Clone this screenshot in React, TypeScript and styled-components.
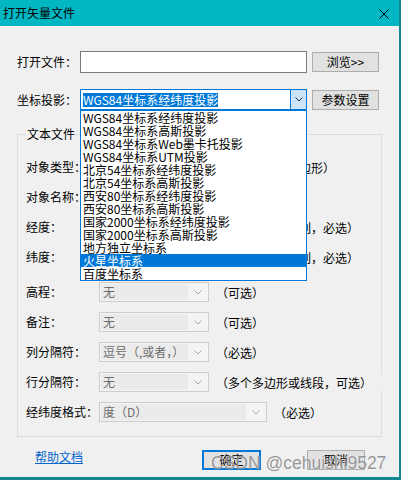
import React from "react";
import styled, { createGlobalStyle } from "styled-components";

const GlobalStyle = createGlobalStyle`
  html, body { margin: 0; padding: 0; background: #13878f; }
  body {
    width: 401px; height: 480px; overflow: hidden;
    font-family: "Noto Sans CJK SC", "Microsoft YaHei", sans-serif;
    font-size: 12px; color: #000;
  }
  * { box-sizing: border-box; }
`;

const Window = styled.div`
  position: relative;
  width: 399px;
  height: 477px;
  background: #f0f0f0;
  display: flex;
  flex-direction: column;
`;

const TitleBar = styled.div`
  height: 26px;
  flex-shrink: 0;
  background: #00b7c3;
  display: flex;
  align-items: center;
  justify-content: space-between;
  padding: 0 10px 0 3px;
`;

const Title = styled.span`
  font-size: 12px;
  line-height: 14px;
`;

const CloseIcon = styled.svg`
  margin-top: 2px;
`;

const Body = styled.div`
  padding: 25px 17px 0 17px;
  display: flex;
  flex-direction: column;
`;

const FormRow = styled.div<{ $top?: number; $h: number }>`
  display: flex;
  align-items: center;
  height: ${(p) => p.$h}px;
  margin-top: ${(p) => p.$top ?? 0}px;
`;

const Label = styled.span<{ $w: number }>`
  width: ${(p) => p.$w}px;
  flex-shrink: 0;
  line-height: 14px;
  white-space: nowrap;
`;

const TextInput = styled.div`
  width: 227px;
  height: 22px;
  background: #fff;
  border: 1px solid #7a7a7a;
`;

const PushButton = styled.div<{ $w: number; $focus?: boolean }>`
  width: ${(p) => p.$w}px;
  height: 20px;
  background: #e1e1e1;
  border: ${(p) => (p.$focus ? "2px solid #0078d7" : "1px solid #adadad")};
  display: flex;
  align-items: center;
  justify-content: center;
  line-height: 14px;
  white-space: nowrap;
`;

const SideButton = styled(PushButton)`
  margin-left: 5px;
`;

const ActiveCombo = styled.div`
  position: relative;
  width: 227px;
  height: 21px;
  background: #fff;
  border: 1px solid #0078d7;
  display: flex;
  align-items: center;
`;

const SelectedText = styled.span`
  margin-left: 2px;
  height: 14px;
  line-height: 14px;
  background: #0078d7;
  color: #fff;
  white-space: nowrap;
`;

const DropButton = styled.div`
  margin-left: auto;
  width: 16px;
  height: 100%;
  background: #cce4f7;
  border-left: 1px solid #0078d7;
  display: flex;
  align-items: center;
  justify-content: center;
`;

const DropList = styled.ul`
  position: absolute;
  z-index: 10;
  top: calc(100% + 1px);
  left: -1px;
  width: 227px;
  margin: 0;
  padding: 0;
  list-style: none;
  background: #fff;
  border: 1px solid #0078d7;
`;

const ListItem = styled.li<{ $active?: boolean }>`
  height: 13px;
  line-height: 13px;
  padding-left: 2px;
  white-space: nowrap;
  background: ${(p) => (p.$active ? "#0078d7" : "transparent")};
  color: ${(p) => (p.$active ? "#fff" : "#000")};
`;

const GroupBox = styled.fieldset`
  margin: 17px 0 0 0;
  padding: 0 0 14px 8px;
  width: 365px;
  min-width: 0;
  border: 1px solid #dcdcdc;
`;

const GroupLegend = styled.legend`
  padding: 0 1px;
  line-height: 14px;
  font-size: 12px;
`;

const GroupRows = styled.div`
  margin-top: 16px;
  display: flex;
  flex-direction: column;
  gap: 10px;
`;

const GroupRow = styled.div<{ $extra?: number }>`
  display: flex;
  align-items: center;
  height: 20px;
  margin-top: ${(p) => p.$extra ?? 0}px;
`;

const DisabledCombo = styled.div<{ $w: number }>`
  width: ${(p) => p.$w}px;
  height: 20px;
  flex-shrink: 0;
  border: 1px solid #cccccc;
  background: #f4f4f4;
  display: flex;
  align-items: center;
  padding: 1px;
`;

const ComboText = styled.span`
  flex: 1;
  height: 100%;
  background: #ebebeb;
  color: #6d6d6d;
  line-height: 16px;
  padding-left: 2px;
  white-space: nowrap;
`;

const ChevronBox = styled.span`
  width: 19px;
  height: 100%;
  display: flex;
  align-items: center;
  justify-content: center;
`;

const Hint = styled.span<{ $gap: number; $mask?: number }>`
  margin-left: ${(p) => p.$gap}px;
  line-height: 15px;
  white-space: nowrap;
  background: #f0f0f0;
  position: relative;
  ${(p) => (p.$mask ? `min-width: ${p.$mask}px;` : "")}
`;

const Footer = styled.div`
  margin-top: 13px;
  height: 20px;
  display: flex;
  align-items: flex-start;
  padding-left: 18px;
`;

const HelpLink = styled.a`
  color: #0066cc;
  text-decoration: underline;
  line-height: 14px;
  cursor: pointer;
`;

const ButtonGroup = styled.div`
  margin-left: auto;
  margin-right: 17px;
  display: flex;
  gap: 46px;
`;

const Watermark = styled.div`
  position: absolute;
  left: 211px;
  top: 454px;
  font-family: "Liberation Sans", Arial, sans-serif;
  font-size: 17.5px;
  line-height: 18px;
  color: rgba(110, 110, 110, 0.72);
  text-shadow: 0 0 1px rgba(255, 255, 255, 0.9);
  white-space: nowrap;
  pointer-events: none;
`;

const Chevron: React.FC<{ color: string }> = ({ color }) => (
  <svg width="8" height="5" viewBox="0 0 8 5">
    <polyline points="0.5,0.5 4,4 7.5,0.5" fill="none" stroke={color} strokeWidth="1" />
  </svg>
);

const projections = [
  "WGS84坐标系经纬度投影",
  "WGS84坐标系高斯投影",
  "WGS84坐标系Web墨卡托投影",
  "WGS84坐标系UTM投影",
  "北京54坐标系经纬度投影",
  "北京54坐标系高斯投影",
  "西安80坐标系经纬度投影",
  "西安80坐标系高斯投影",
  "国家2000坐标系经纬度投影",
  "国家2000坐标系高斯投影",
  "地方独立坐标系",
  "火星坐标系",
  "百度坐标系",
];

type RowDef = {
  label: string;
  value: string;
  width: number;
  hint?: string;
  gap: number;
  extra?: number;
  mask?: number;
};

const rows: RowDef[] = [
  { label: "对象类型：", value: "", width: 120, hint: "（点、线、多边形）", gap: 8 },
  { label: "对象名称：", value: "", width: 120, hint: "（可选）", gap: 8 },
  { label: "经度：", value: "", width: 120, hint: "（经度所在的列，必选）", gap: 8 },
  { label: "纬度：", value: "", width: 120, hint: "（纬度所在的列，必选）", gap: 8 },
  { label: "高程：", value: "无", width: 110, hint: "（可选）", gap: 7, extra: 5 },
  { label: "备注：", value: "无", width: 110, hint: "（可选）", gap: 7 },
  { label: "列分隔符：", value: "逗号（,或者，）", width: 110, hint: "（必选）", gap: 7 },
  { label: "行分隔符：", value: "无", width: 110, hint: "（多个多边形或线段，可选）", gap: 7, mask: 168 },
  { label: "经纬度格式：", value: "度（D）", width: 168, hint: "（必选）", gap: 7 },
];

export default function App() {
  return (
    <>
      <GlobalStyle />
      <Window>
        <TitleBar>
          <Title>打开矢量文件</Title>
          <CloseIcon width="10" height="10" viewBox="0 0 10 10">
            <path d="M0.5 0.5 L9.5 9.5 M9.5 0.5 L0.5 9.5" stroke="#000" strokeWidth="1" />
          </CloseIcon>
        </TitleBar>
        <Body>
          <FormRow $h={22}>
            <Label $w={63}>打开文件：</Label>
            <TextInput />
            <SideButton $w={67}>浏览&gt;&gt;</SideButton>
          </FormRow>
          <FormRow $h={21} $top={16}>
            <Label $w={63}>坐标投影：</Label>
            <ActiveCombo>
              <SelectedText>WGS84坐标系经纬度投影</SelectedText>
              <DropButton>
                <Chevron color="#333" />
              </DropButton>
              <DropList>
                {projections.map((p) => (
                  <ListItem key={p} $active={p === "火星坐标系"}>
                    {p}
                  </ListItem>
                ))}
              </DropList>
            </ActiveCombo>
            <SideButton $w={67}>参数设置</SideButton>
          </FormRow>
          <GroupBox>
            <GroupLegend>文本文件</GroupLegend>
            <GroupRows>
              {rows.map((r) => (
                <GroupRow key={r.label} $extra={r.extra}>
                  <Label $w={73}>{r.label}</Label>
                  <DisabledCombo $w={r.width}>
                    <ComboText>{r.value}</ComboText>
                    <ChevronBox>
                      <Chevron color="#a6a6a6" />
                    </ChevronBox>
                  </DisabledCombo>
                  {r.hint && (
                    <Hint $gap={r.gap} $mask={r.mask}>
                      {r.hint}
                    </Hint>
                  )}
                </GroupRow>
              ))}
            </GroupRows>
          </GroupBox>
          <Footer>
            <HelpLink>帮助文档</HelpLink>
            <ButtonGroup>
              <PushButton $w={59} $focus>
                确定
              </PushButton>
              <PushButton $w={58}>取消</PushButton>
            </ButtonGroup>
          </Footer>
        </Body>
        <Watermark>CSDN @cehuishi9527</Watermark>
      </Window>
    </>
  );
}
